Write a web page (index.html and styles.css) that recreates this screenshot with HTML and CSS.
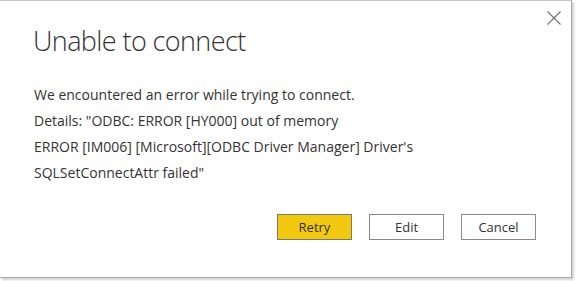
FILE: index.html
```html
<!DOCTYPE html>
<html>
<head>
<meta charset="utf-8">
<link rel="stylesheet" href="styles.css">
</head>
<body>
<div class="dialog">
  <button class="close" aria-label="Close">
    <svg width="14" height="14" viewBox="0 0 14 14"><path d="M0.5 0.5 L13.5 13.5 M13.5 0.5 L0.5 13.5" stroke="#707070" stroke-width="1.1" fill="none"/></svg>
  </button>
  <h1 class="title">Unable to connect</h1>
  <div class="message">
    <p>We encountered an error while trying to connect.</p>
    <p>Details: "ODBC: ERROR [HY000] out of memory<br>ERROR [IM006] [Microsoft][ODBC Driver Manager] Driver's<br>SQLSetConnectAttr failed"</p>
  </div>
  <div class="actions">
    <button class="btn primary">Retry</button>
    <button class="btn">Edit</button>
    <button class="btn">Cancel</button>
  </div>
</div>
</body>
</html>
```
FILE: styles.css
```css
html, body {
  margin: 0;
  padding: 0;
  background: #ffffff;
}
body {
  width: 576px;
  height: 281px;
  overflow: hidden;
  font-family: "Open Sans", "Liberation Sans", sans-serif;
  color: #333333;
}
.dialog {
  position: relative;
  box-sizing: border-box;
  width: 572px;
  height: 278px;
  background: #ffffff;
  border-top: 1px solid #c6c6c6;
  border-right: 1px solid #a8a8a8;
  border-bottom: 1px solid #a8a8a8;
  box-shadow: 2px 2px 2px rgba(0, 0, 0, 0.18);
  padding: 0 35px 0 34px;
  display: flex;
  flex-direction: column;
}
.close {
  position: absolute;
  top: 9px;
  right: 9px;
  width: 16px;
  height: 16px;
  padding: 1px;
  border: none;
  background: transparent;
  display: flex;
}
.title {
  margin: 20px 0 0 -1px;
  font-size: 27px;
  font-weight: 300;
  line-height: 40px;
  color: #333333;
  letter-spacing: -0.6px;
}
.message {
  margin-top: 21px;
  font-size: 14px;
  line-height: 26px;
  color: #333333;
}
.message p {
  margin: 0;
}
.actions {
  margin-top: 28px;
  display: flex;
  justify-content: flex-end;
  gap: 17px;
}
.btn {
  box-sizing: border-box;
  width: 75px;
  height: 26px;
  border: 1px solid #8a8a8a;
  background: #ffffff;
  font-family: "Open Sans", "Liberation Sans", sans-serif;
  font-size: 13px;
  color: #333333;
  padding: 0;
}
.btn.primary {
  background: #f2c811;
  border-color: #7a7a6a;
}
```
